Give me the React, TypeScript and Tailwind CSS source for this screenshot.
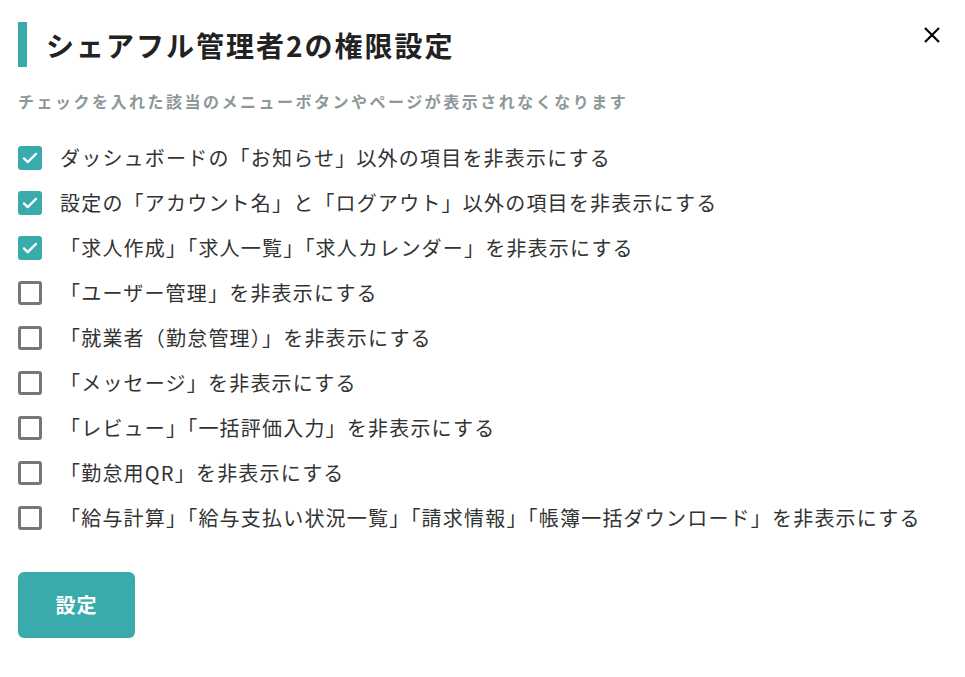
import { useState } from 'react'

const items = [
  { label: 'ダッシュボードの「お知らせ」以外の項目を非表示にする', checked: true },
  { label: '設定の「アカウント名」と「ログアウト」以外の項目を非表示にする', checked: true },
  { label: '「求人作成」「求人一覧」「求人カレンダー」を非表示にする', checked: true },
  { label: '「ユーザー管理」を非表示にする', checked: false },
  { label: '「就業者（勤怠管理）」を非表示にする', checked: false },
  { label: '「メッセージ」を非表示にする', checked: false },
  { label: '「レビュー」「一括評価入力」を非表示にする', checked: false },
  { label: '「勤怠用QR」を非表示にする', checked: false },
  { label: '「給与計算」「給与支払い状況一覧」「請求情報」「帳簿一括ダウンロード」を非表示にする', checked: false },
]

const Checkbox = ({ checked }: { checked: boolean }) =>
  checked ? (
    <span className="flex h-6 w-6 shrink-0 items-center justify-center rounded-[3px] bg-[#3aabad]">
      <svg width="18" height="18" viewBox="0 0 24 24" fill="none" stroke="white" strokeWidth="3" strokeLinecap="round" strokeLinejoin="round">
        <path d="M4 12.5l5 5L20 6.5" />
      </svg>
    </span>
  ) : (
    <span className="h-6 w-6 shrink-0 rounded-[3px] border-[3px] border-[#777]" />
  )

const App = () => {
  const [state, setState] = useState(items.map((i) => i.checked))

  return (
    <div className="relative min-h-screen bg-white px-[18px] pt-[22px] font-['Noto_Sans_CJK_JP',sans-serif]">
      <button className="absolute right-[24px] top-[26px] text-black">
        <svg width="18" height="18" viewBox="0 0 18 18" stroke="currentColor" strokeWidth="2.2">
          <path d="M2 2l14 14M16 2L2 16" />
        </svg>
      </button>

      <div className="flex items-center">
        <div className="h-[45px] w-[9px] bg-[#3aabad]" />
        <h1 className="ml-[19px] text-[28px] font-bold leading-none tracking-[2px] text-[#222]">
          シェアフル管理者2の権限設定
        </h1>
      </div>

      <p className="mt-[26px] text-[16px] font-bold leading-none tracking-[2.5px] text-[#8e9799]">
        チェックを入れた該当のメニューボタンやページが表示されなくなります
      </p>

      <ul className="mt-[37px] flex flex-col gap-[21px]">
        {items.map((item, i) => (
          <li
            key={i}
            className="flex cursor-pointer items-center"
            onClick={() => setState(state.map((v, j) => (j === i ? !v : v)))}
          >
            <Checkbox checked={state[i]} />
            <span className="ml-[18px] text-[20px] leading-6 tracking-[1.2px] text-[#333]">{item.label}</span>
          </li>
        ))}
      </ul>

      <button className="mt-[42px] h-[66px] w-[117px] rounded-[6px] bg-[#3aabad] text-[20px] font-bold tracking-[1px] text-white">
        設定
      </button>
    </div>
  )
}

export default App
